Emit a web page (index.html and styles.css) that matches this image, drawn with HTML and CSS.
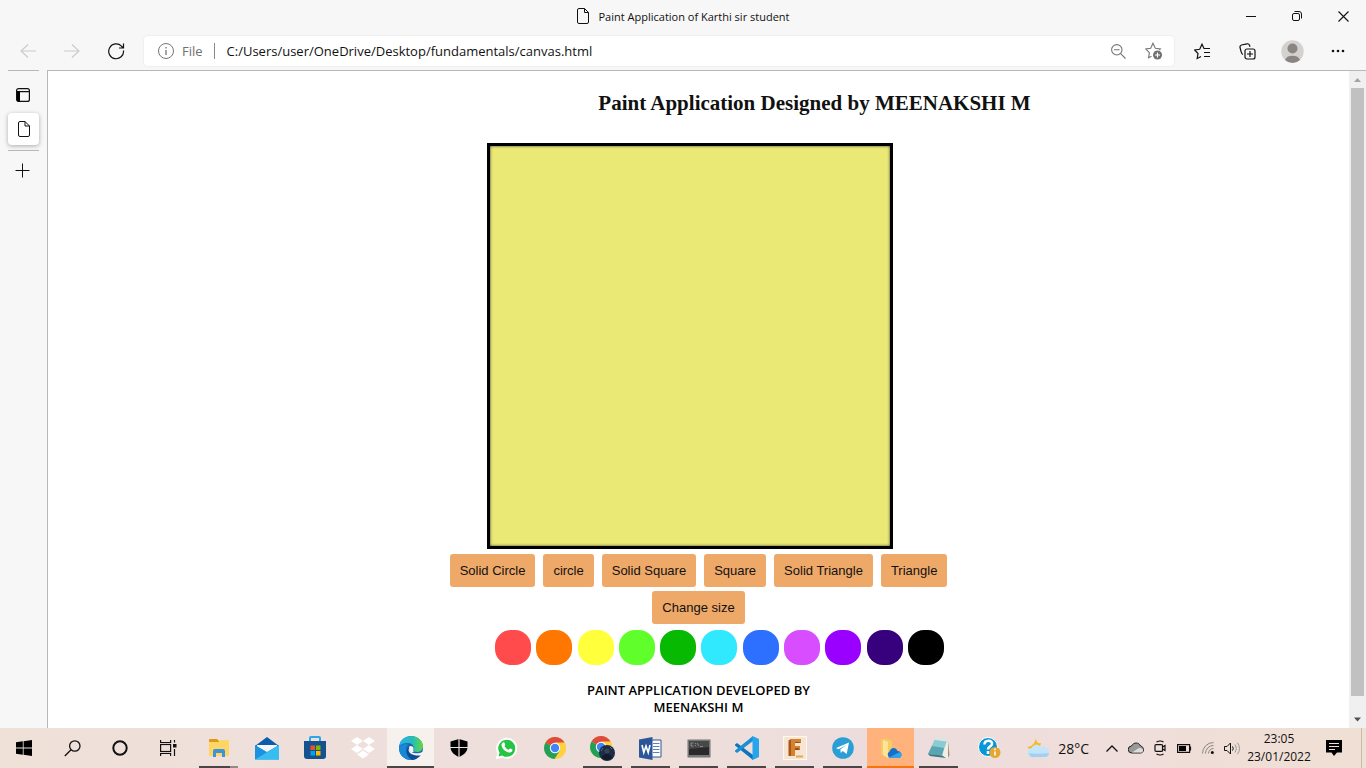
FILE: index.html
```html
<!DOCTYPE html>
<html lang="en">
<head>
<meta charset="utf-8">
<title>Paint Application of Karthi sir student</title>
<link rel="stylesheet" href="styles.css">
</head>
<body>
<header class="titlebar">
  <div class="tab-title">
    <svg width="12" height="16" viewBox="0 0 12 16" fill="none" stroke="#111"><path d="M2 .5h5.500l4 4V14a1.500 1.500 0 0 1-1.500 1.500H2A1.500 1.500 0 0 1 .5 14V2A1.500 1.500 0 0 1 2 .5zM7.500 .5v4h4"/></svg>
    <span>Paint Application of Karthi sir student</span>
  </div>
  <div class="window-controls">
    <button aria-label="Minimize"><svg width="10" height="10" stroke="#111"><path d="M0 5.500h10"/></svg></button>
    <button aria-label="Restore"><svg width="10" height="10" fill="none" stroke="#111"><rect x=".5" y="2.500" width="7" height="7" rx="1.500"/><path d="M2.500 .5h4.500a2.500 2.500 0 0 1 2.500 2.500v4.500"/></svg></button>
    <button aria-label="Close"><svg width="11" height="11" stroke="#111" stroke-width="1.100"><path d="M.5 .5l10 10M10.500 .5l-10 10"/></svg></button>
  </div>
</header>
<nav class="toolbar" aria-label="Browser toolbar">
  <button class="nav-button" aria-label="Back" disabled><svg width="16" height="14" fill="none" stroke="#ccc" stroke-width="1.200"><path d="M16 7H1M8 .5L1 7l7 6.500"/></svg></button>
  <button class="nav-button" aria-label="Forward" disabled><svg width="16" height="14" fill="none" stroke="#ccc" stroke-width="1.200"><path d="M0 7h15M8 .5L15 7l-7 6.500"/></svg></button>
  <button class="nav-button" aria-label="Reload"><svg width="17" height="17" viewBox="0 0 17 17" fill="none" stroke="#111" stroke-width="1.200"><path d="M15.500 7.500A7.400 7.400 0 1 1 13.500 3.200L15.500 5M15.500 .5V5H11"/></svg></button>
  <div class="address">
    <svg width="16" height="16" fill="none" stroke="#757575"><circle cx="8" cy="8" r="7.500"/><path d="M8 7v5M8 4v1.500" stroke-width="1.300"/></svg>
    <label class="scheme" for="url">File</label>
    <input id="url" class="url" type="text" value="C:/Users/user/OneDrive/Desktop/fundamentals/canvas.html">
    <button aria-label="Zoom"><svg width="15" height="15" fill="none" stroke="#767676" stroke-width="1.100"><circle cx="5.800" cy="5.800" r="5.200"/><path d="M3 5.800h5.600M9.600 9.600l4.900 4.900"/></svg></button>
    <button aria-label="Add to favourites"><svg width="18" height="18" fill="none" stroke="#767676" stroke-width="1.100"><path d="M6.500 14.200L3.600 15.700l.8-5L.7 7l5-.7L8 1.200l2.300 5.100 5 .7-1 1"/><circle cx="12.500" cy="13" r="4.500" fill="#707070" stroke="none"/><path d="M12.500 10.500v5M10 13h5" stroke="#fff"/></svg></button>
  </div>
  <div class="tools">
    <button aria-label="Favourites"><svg width="17" height="17" fill="none" stroke="#111" stroke-width="1.200"><path d="M7 13.500l-3.800 2 .8-5L.7 7l5-.7L8 1.200l2 4.300h6M10 9.500h6M10 13.500h6"/></svg></button>
    <button aria-label="Collections"><svg width="17" height="17" fill="none" stroke="#111" stroke-width="1.200"><rect x="6" y="6" width="10" height="10" rx="2"/><path d="M11 8v6M8 11h6M4 11.500C2.500 11 2.500 10 1.800 7.500L1 4.500C.7 3 1 2.500 2.500 2L8 .8c1.500-.3 2 0 2.500 1.500l.5 1.500"/></svg></button>
    <button aria-label="Profile"><svg width="23" height="23"><circle cx="11.500" cy="11.500" r="11.200" fill="#d3d2cf"/><circle cx="11.500" cy="8.500" r="5" fill="#8a8583"/><path d="M4 20a7.700 5.500 0 0 1 15 0a11.200 11.200 0 0 1-15 0z" fill="#8a8583"/></svg></button>
    <button aria-label="Settings and more"><svg width="14" height="4" fill="#111"><circle cx="2" cy="2" r="1.300"/><circle cx="7" cy="2" r="1.300"/><circle cx="12" cy="2" r="1.300"/></svg></button>
  </div>
</nav>
<div class="workspace">
  <aside class="vertical-tabs">
    <button aria-label="Tab actions"><svg width="14" height="14" fill="none" stroke="#111" stroke-width="1.200"><rect x=".6" y=".6" width="12.800" height="12.800" rx="2"/><path d="M.6 3.600h12.800M2.200 3.600v9.800" /><path d="M1 3h3v11H2.500L1 12.500z" fill="#000" stroke="none"/></svg></button>
    <button class="active-tab" aria-label="Paint Application of Karthi sir student"><svg width="12" height="16" viewBox="0 0 12 16" fill="none" stroke="#111"><path d="M2 .5h5l4.500 4.500V14a1.500 1.500 0 0 1-1.500 1.500H2A1.500 1.500 0 0 1 .5 14V2A1.500 1.500 0 0 1 2 .5zM7 .5V5h4.500"/></svg></button>
    <button class="new-tab" aria-label="New tab"><svg width="15" height="15" stroke="#111"><path d="M.5 7.500h14M7.500 .5v14"/></svg></button>
  </aside>
  <main class="paint">
    <h1 class="paint-title">Paint Application Designed by MEENAKSHI M</h1>
    <canvas class="board" width="400" height="400"></canvas>
    <div class="shapes">
      <button>Solid Circle</button>
      <button>circle</button>
      <button>Solid Square</button>
      <button>Square</button>
      <button>Solid Triangle</button>
      <button>Triangle</button>
      <button>Change size</button>
    </div>
    <div class="palette">
      <button class="red" aria-label="Red"></button>
      <button class="orange" aria-label="Orange"></button>
      <button class="yellow" aria-label="Yellow"></button>
      <button class="lime" aria-label="Lime"></button>
      <button class="green" aria-label="Green"></button>
      <button class="cyan" aria-label="Cyan"></button>
      <button class="blue" aria-label="Blue"></button>
      <button class="pink" aria-label="Pink"></button>
      <button class="purple" aria-label="Purple"></button>
      <button class="indigo" aria-label="Indigo"></button>
      <button class="black" aria-label="Black"></button>
    </div>
    <p class="credit">PAINT APPLICATION DEVELOPED BY<br>MEENAKSHI M</p>
  </main>
  <div class="scrollbar">
    <svg width="17" height="17"><path d="M5 11l3.500-4 3.500 4z" fill="#a3a3a3"/></svg>
    <div class="thumb"></div>
    <svg width="17" height="17"><path d="M5 6.500h7l-3.500 4z" fill="#505050"/></svg>
  </div>
</div>
<footer class="taskbar">
  <div class="system">
    <button aria-label="Start"><svg width="16" height="16"><path d="M0 2.300L6.800 1.300v6.300H0zM7.600 1.200L16 0v7.600H7.600zM0 8.400h6.800v6.300L0 13.700zM7.600 8.400H16V16l-8.400-1.200z"/></svg></button>
    <button aria-label="Search"><svg width="17" height="17" fill="none" stroke="#111" stroke-width="1.300"><circle cx="10.800" cy="6" r="5.200"/><path d="M7 9.800L.8 16"/></svg></button>
    <button aria-label="Cortana"><svg width="16" height="16" fill="none" stroke="#111" stroke-width="2"><circle cx="8" cy="8" r="6.700"/></svg></button>
    <button aria-label="Task view"><svg width="17" height="16" fill="none" stroke="#111" stroke-width="1.200"><path d="M.6 0v2.500h10V0M.6 16v-2.500h10V16M14.500 0v2.500M14.500 9v7"/><rect x=".6" y="4.500" width="10" height="7"/><path d="M13 4h3.500v3.500H13z" fill="#111" stroke="none"/></svg></button>
  </div>
  <div class="apps">
    <button class="running stacked" aria-label="File Explorer"><svg width="22" height="20"><path d="M1 2q0-1 1-1h7l2 2v2H1z" fill="#dc9b12"/><path d="M1 4h10l1-2h8q1 0 1 1v14q0 1-1 1H2q-1 0-1-1z" fill="#ffd563"/><path d="M5 19v-6q0-2 2-2h8q2 0 2 2v6h-3v-4H8v4z" fill="#3994db"/></svg></button>
    <button aria-label="Mail"><svg width="24" height="23"><path d="M0 9L12 0l12 9v5H0z" fill="#0b5cad"/><path d="M2 8h20v8H2z" fill="#f6f6f6"/><path d="M0 8l12 7L24 8v14.500H0z" fill="#1b92df"/><path d="M24 8v14.500H0L14 14z" fill="#37bdf2"/></svg></button>
    <button aria-label="Store"><svg width="24" height="24"><path d="M7 6V2q0-1 1-1h8q1 0 1 1v4" fill="none" stroke="#2aa7e8" stroke-width="2"/><path d="M1 5h22v15q0 3-3 3H4q-3 0-3-3z" fill="#16508f"/><path d="M7.500 9.500H12V14H7.500z" fill="#f25022"/><path d="M13 9.500h4.500V14H13z" fill="#7fba00"/><path d="M7.500 15H12v4.500H7.500z" fill="#00a4ef"/><path d="M13 15h4.500v4.500H13z" fill="#ffb900"/></svg></button>
    <button aria-label="Dropbox"><svg width="24" height="22" fill="#fff"><path d="M6 0l6 4-6 4-6-4zM18 0l6 4-6 4-6-4zM6 8l6 4-6 4-6-4zM18 8l6 4-6 4-6-4zM12 13.500l6 4-6 4-6-4z"/></svg></button>
    <button class="running current" aria-label="Edge"><svg width="24" height="24" viewBox="0 0 24 24"><defs><linearGradient id="edge-a" x1="0" x2="1"><stop stop-color="#2cafe9"/><stop offset=".55" stop-color="#25bdbb"/><stop offset="1" stop-color="#65d83c"/></linearGradient></defs><circle cx="12" cy="12" r="12" fill="#1667b5"/><path d="M.2 10C1.500 3.500 6.500 0 12 0c7 0 12 5 12 10 0 4-3 6-6 6-3 0-4.300-1-3.500-2.500C16 10 13 7 9 7c-4 0-7 1-8.800 3z" fill="url(#edge-a)"/><path d="M.1 10.500C3 7.500 7 7.500 9.500 8.500 7 10.500 6 14 8 18.500c1 2.300 3 4 5 5.400C5 24.500-.8 18 .1 10.500z" fill="#1688d4"/><path d="M9.500 11c-.8 5 3.500 8.500 12.300 7.300C20 21.500 17 23.500 13.500 24 7.500 21 6 15 9.500 11z" fill="#0c4b99"/><path d="M10.500 11.500c-1 3.500 3 6.300 8.500 5.800 2-.2 3.500-.8 4.500-1.500l1.500 1-2.500 2.500c-5 1-12.500-.5-13-5.300z" fill="#f7f1ee"/><path d="M10 11c1.500-2 5-.5 4.500 2.200-.7 1.300 0 2 .5 2.500l-3 .5q-2.500-2-2-5.200z" fill="#f7f1ee"/></svg></button>
    <button aria-label="Windows Security"><svg width="18" height="18"><path d="M9 0l8.500 2.500V8c0 5-4 8-8.500 10C4.500 16 .5 13 .5 8V2.500z"/><path d="M9 0v18M0 8.500h18" stroke="#eee0db" stroke-width="1.200"/></svg></button>
    <button aria-label="WhatsApp"><svg width="21" height="22"><path d="M1 21l1.500-5A9.500 9.500 0 1 1 6 19.500z" fill="#25c443" stroke="#fff" stroke-width="2"/><path d="M7 5.500c1-.6 1.500 0 2 1.500.5 1.300-.5 1.500-.5 2 1 2 2.200 3 4 3.800.8-.3 1-1.500 1.700-1.300 1 .4 2.300 1 2.300 1.500 0 1.500-1.500 2.700-3 2.500C9 15 5.500 11 5.500 8c0-1 .7-2 1.500-2.500z" fill="#fff"/></svg></button>
    <button aria-label="Chrome"><svg width="22" height="22"><circle cx="11" cy="11" r="11" fill="#ffd13f"/><path d="M11 11L1.500 5.500A11 11 0 0 1 20.500 5.500z" fill="#df4b3e"/><path d="M11 11L1.500 5.500A11 11 0 0 0 10.500 22l5.500-8.500z" fill="#22a05b"/><path d="M11 5.500h9.500A11 11 0 0 1 11 22l5-8.500z" fill="#ffd13f"/><circle cx="11" cy="11" r="5.200" fill="#fff"/><circle cx="11" cy="11" r="4.200" fill="#4286f5"/></svg></button>
    <button class="running" aria-label="Chrome, second profile"><svg width="25" height="25"><circle cx="11" cy="11" r="11" fill="#ffd13f"/><path d="M11 11L1.500 5.500A11 11 0 0 1 20.500 5.500z" fill="#df4b3e"/><path d="M11 11L1.500 5.500A11 11 0 0 0 10.500 22l5.500-8.500z" fill="#22a05b"/><path d="M11 5.500h9.500A11 11 0 0 1 11 22l5-8.500z" fill="#ffd13f"/><circle cx="11" cy="11" r="5.200" fill="#fff"/><circle cx="11" cy="11" r="4.200" fill="#4286f5"/><circle cx="17" cy="17" r="8" fill="#1c2d45"/><path d="M12 22q1-4 5-4t5 4q-5 4-10 0z" fill="#111b2c"/><circle cx="17" cy="15" r="2.500" fill="#34445b"/><path d="M11 15l2-3M20 11l2 2" stroke="#466b94"/></svg></button>
    <button class="running" aria-label="Word"><svg width="23" height="23"><path d="M12 3h10v17H12z" fill="#fff" stroke="#2b579a"/><path d="M14 6.500h6.500M14 9.500h6.500M14 12.500h6.500M14 15.500h6.500" stroke="#5b80bd" stroke-width="1.200"/><path d="M0 2.500L13.500 0v23L0 20.500z" fill="#2b579a"/><path d="M3 8l1.800 7.500L7 9l2.200 6.500L11 8" fill="none" stroke="#fff" stroke-width="1.600"/></svg></button>
    <button class="running" aria-label="Command Prompt"><svg width="24" height="19"><rect x=".5" y=".5" width="23" height="18" rx="1" fill="#777" stroke="#aaa"/><path d="M2 2h20v14H2z" fill="#292929"/><path d="M2 2h20v6L2 10z" fill="#484848"/><path d="M6.500 4H4v3h2.500M8 4.500h1M8 6.500h1M10 4l2 3M13 7.500h3" fill="none" stroke="#888"/></svg></button>
    <button class="running" aria-label="Visual Studio Code"><svg width="24" height="24"><path d="M0 8.500L2 7l16 12v5L0 9.500z" fill="#0b75bd"/><path d="M0 15.500L2 17 18 5V0L0 14.500z" fill="#1b8fd3"/><path d="M17.500 0L24 3v18l-6.500 3z" fill="#26a5ed"/></svg></button>
    <button class="running" aria-label="Fusion 360"><svg width="24" height="24"><rect x=".5" y=".5" width="23" height="23" fill="#f7e5d4" stroke="#fff8ef"/><path d="M8 3h10v4h-6v3h5v4h-5v6H8z" fill="#d6812b"/><path d="M8 3L5.500 4.500V20H8z" fill="#a95418"/><path d="M12 14h5l-2-2h-3M12 7h6l-2-1h-4" fill="#9a4c15"/><path d="M13 20.500h7" stroke="#e7a552" stroke-width="2"/></svg></button>
    <button class="running" aria-label="Telegram"><svg width="22" height="22"><circle cx="11" cy="11" r="10.800" fill="#2b9ed6"/><path d="M4 11l13-5.500-2.300 11.500-4-3-2 2-.3-3.700L14.500 8l-8 4.300z" fill="#fff"/></svg></button>
    <button class="running alert" aria-label="OneDrive folder"><svg width="22" height="21"><path d="M1 1h7l4 2v15H4L1 16z" fill="#f3cd62"/><path d="M3 2l5 2v16l-5-3z" fill="#ffe39a"/><path d="M11 20a3.500 3.500 0 0 1-1.500-6.500C11 9 16 9 17.500 13c5 0 5 7 1 7z" fill="#1670c9"/><path d="M10 19l10-5c3 2 1.500 6-1.500 6H11z" fill="#2fa4ed"/></svg></button>
    <button class="running" aria-label="Notepad"><svg width="23" height="23"><path d="M20 3l2 18h-3l-4-4z" fill="#f0eee8"/><path d="M21 4l1.500 14-1.500 3z" fill="#a98d67"/><path d="M8 2l12 1.500-5 15L1 17z" fill="#8bcbd2"/><path d="M5 9l12 2-2 7.500L1 17z" fill="#5ba5b3"/><path d="M1 17l14 1.500 4 2.500L3 19z" fill="#397780"/><path d="M8 2l12 1.500" stroke="#d2e8e7" stroke-width="2"/></svg></button>
    <button class="help" aria-label="Get help"><svg width="23" height="22"><circle cx="10" cy="10" r="9.500" fill="#0796d8" stroke="#fff"/><path d="M6.500 7.500c0-5 8-5 7.500-.5-.2 2.500-4 2.500-4 5.500M10 14v3" fill="none" stroke="#fff" stroke-width="2.600"/><circle cx="17" cy="15.500" r="5.500" fill="#e8a630"/><path d="M17 14.500v4M17 11.500v1.700" stroke="#fff" stroke-width="1.600"/></svg></button>
  </div>
  <div class="tray">
    <button class="weather"><svg width="23" height="20"><path d="M9 0c0 4 2 6 5 5l-2 7H4L0 9c5 0 8-4 9-9z" fill="#f8b91c"/><path d="M5 19a4.500 4.500 0 0 1-.5-9c2-4 7-5 9-1 5-2 9 2 8.500 6-.4 3-2.500 4-4.500 4z" fill="#c3e4f9"/><path d="M2 15c5 1 12 1 20 0-.6 3-2 4-4 4H5c-1.500 0-3-2-3-4z" fill="#a2d0f3"/></svg><span>28°C</span></button>
    <button class="tray-icon" aria-label="Show hidden icons"><svg width="12" height="7" fill="none" stroke="#111" stroke-width="1.300"><path d="M.5 6.500L6 1l5.500 5.500"/></svg></button>
    <button class="tray-icon" aria-label="OneDrive"><svg width="16" height="12"><path d="M4 11a3.500 3.500 0 0 1-.5-7c2-4 7.500-4 9 0 4 .5 4 7 0 7z" fill="#999" stroke="#222"/><path d="M4 10.500L11 6c3 0 4 1 4 2.500s-1 2-2 2z" fill="#ddd"/></svg></button>
    <button class="tray-icon" aria-label="Meet now"><svg width="13" height="16" fill="none" stroke="#111" stroke-width="1.200"><rect x="1" y="4.600" width="7.500" height="6.800" rx="1"/><path d="M8.500 7l2.500-1.500v5L8.500 9M2.500 2q4-2 7 0M2.500 14q4 2 7 0"/></svg></button>
    <button class="tray-icon" aria-label="Battery"><svg width="15" height="9"><path d="M.6 .6h12v7.800H.6zM13.500 2.500v4" fill="none" stroke="#111" stroke-width="1.200"/><path d="M2 2h7v5H2z"/></svg></button>
    <button class="tray-icon" aria-label="Wi-Fi"><svg width="12" height="12" fill="none" stroke="#8c8380"><path d="M.5 11.500A11 11 0 0 1 11.500 .5M3.500 11.500a8 8 0 0 1 8-8M6.500 11.500a5 5 0 0 1 5-5"/><circle cx="10.300" cy="10.500" r="1.500" fill="#111" stroke="none"/></svg></button>
    <button class="tray-icon" aria-label="Volume"><svg width="17" height="13" fill="none" stroke="#111"><path d="M.5 4.500h2.500L6.500 1v11L3 8.500H.5zM8.500 4.500q1.500 2 0 4"/><path d="M11 2.500q3 4 0 8M13.500 .8q4 5.700 0 11.400" stroke="#999"/></svg></button>
    <button class="clock">23:05<br>23/01/2022</button>
    <button class="notifications" aria-label="Notifications"><svg width="16" height="16"><path d="M0 0h16v12.500h-5L8 16l-2.500-3.500H0z"/><path d="M3 3.500h10M3 6.500h10M3 9.500h6" stroke="#efe0d8"/></svg></button>
  </div>
</footer>
</body>
</html>
```

FILE: styles.css
```css
* {
  box-sizing: border-box;
}

body {
  display: flex;
  flex-direction: column;
  min-height: 100vh;
  margin: 0;
  background: #f7f7f7;
  color: #111;
  font-family: "Open Sans", sans-serif;
}

button {
  display: flex;
  align-items: center;
  justify-content: center;
  padding: 0;
  border: 0;
  background: transparent;
  color: inherit;
  font: inherit;
}

svg {
  display: block;
  flex: none;
}

.titlebar {
  display: grid;
  grid-template-columns: 1fr auto 1fr;
  height: 32px;
}

.tab-title {
  display: flex;
  grid-column: 2;
  align-items: center;
  gap: 10px;
  font-size: 11px;
}

.window-controls {
  display: flex;
  justify-content: flex-end;
}

.window-controls button {
  width: 46px;
}

.toolbar {
  display: flex;
  align-items: center;
  height: 38px;
  padding: 0 6px;
}

.nav-button {
  width: 44px;
  height: 30px;
}

.address {
  display: flex;
  flex: 1;
  align-items: center;
  height: 30px;
  margin: 0 6px;
  padding: 0 2px 0 14px;
  border-radius: 4px;
  background: #fff;
  box-shadow: 0 0 2px #ddd;
  font-size: 13px;
}

.scheme {
  margin-left: 8px;
  padding-right: 11px;
  border-right: 1px solid #888;
  color: #707070;
  line-height: 16px;
}

.url {
  flex: 1;
  min-width: 0;
  padding: 0;
  margin-left: 12px;
  border: 0;
  outline: 0;
  color: #111;
  font: inherit;
}

.address button {
  width: 36px;
}

.tools {
  display: flex;
}

.tools button {
  width: 45px;
}

.workspace {
  display: flex;
  flex: 1;
}

.vertical-tabs {
  display: flex;
  flex-direction: column;
  width: 47px;
  padding: 0 8px;
}

.vertical-tabs button {
  height: 42px;
  width: 31px;
  border-top: 1px solid #b8b8b8;
  padding: 6px 2px 0 0;
}

.vertical-tabs .active-tab {
  height: 32px;
  margin: 1px 0 5px;
  padding: 0;
  border: 0;
  border-radius: 4px;
  background: #fff;
  box-shadow: 0 1px 4px #aaa;
}

.vertical-tabs .new-tab {
  height: 40px;
  padding: 0 2px 0 0;
}

.paint {
  display: flex;
  flex: 1;
  flex-direction: column;
  align-items: center;
  padding: 20px 0 11px;
  border-top: 1px solid #b8b8b8;
  border-left: 1px solid #b8b8b8;
  background: #fff;
}

.paint-title {
  margin: 0 0 28px 232px;
  font: bold 21px/24px "Liberation Serif", serif;
}

.board {
  margin: 0 17px 5px 0;
  border: 3px solid #000;
  background: #ebe976;
  box-shadow: inset 0 0 3px #333;
}

.shapes {
  display: flex;
  flex-wrap: wrap;
  justify-content: center;
  gap: 4px 8px;
  max-width: 516px;
  font: 13px/15px "Liberation Sans", sans-serif;
}

.shapes button {
  padding: 9px 10px;
  border-radius: 3px;
  background: #eea868;
}

.palette {
  display: flex;
  justify-content: space-between;
  width: 449px;
  margin: 6px 0 17px 42px;
}

.palette button {
  width: 36px;
  height: 35px;
  border-radius: 16px;
}

.red { background: #ff4b4b; }
.orange { background: #ff7700; }
.yellow { background: #ffff3c; }
.lime { background: #60ff2c; }
.green { background: #07b900; }
.cyan { background: #30e9ff; }
.blue { background: #2d70ff; }
.pink { background: #d84dff; }
.purple { background: #9900ff; }
.indigo { background: #37007d; }
.black { background: #000; }

.credit {
  margin: 0;
  color: #000;
  font-size: 13px;
  font-weight: 600;
  line-height: 17px;
  text-align: center;
}

.scrollbar {
  display: flex;
  flex-direction: column;
  align-items: center;
  width: 17px;
  border-top: 1px solid #b8b8b8;
  background: #f0f0f0;
}

.thumb {
  flex: 1;
  width: 13px;
  margin-bottom: 15px;
  background: #c1c1c1;
}

.taskbar {
  display: flex;
  height: 40px;
  background: linear-gradient(90deg, #efe1d8, #eedfdc 30%, #efdfdb 50%, #ecdcdc 63%, #efdedb 80%, #f0dfd3);
}

.system,
.apps,
.tray {
  display: flex;
}

.system button {
  width: 48px;
}

.apps {
  gap: 1px;
  margin-left: 3px;
}

.apps button {
  width: 47px;
  border-bottom: 2px solid transparent;
  padding-top: 2px;
}

.apps .running {
  background: linear-gradient(#4b4646, #4b4646) center bottom / 39px 2px no-repeat border-box;
}

.apps .stacked {
  background: linear-gradient(90deg, #4b4646 31px, #938b89 31px) center bottom / 39px 2px no-repeat border-box;
}

.apps .current {
  border-color: #4b4646;
  background: #f7f1ee;
}

.apps .alert {
  border-color: #f97306;
  background: #ffb27c;
}

.apps .help {
  margin-left: 3px;
}

.tray {
  flex: 1;
  justify-content: flex-end;
  padding-right: 4px;
}

.weather {
  gap: 8px;
  margin-right: 11px;
  font-size: 14px;
}

.tray-icon {
  width: 24px;
}

.clock {
  width: 70px;
  font-size: 12px;
  line-height: 18px;
}

.notifications {
  width: 48px;
  padding-right: 8px;
  border-right: 1px solid #c9bab3;
}
```
